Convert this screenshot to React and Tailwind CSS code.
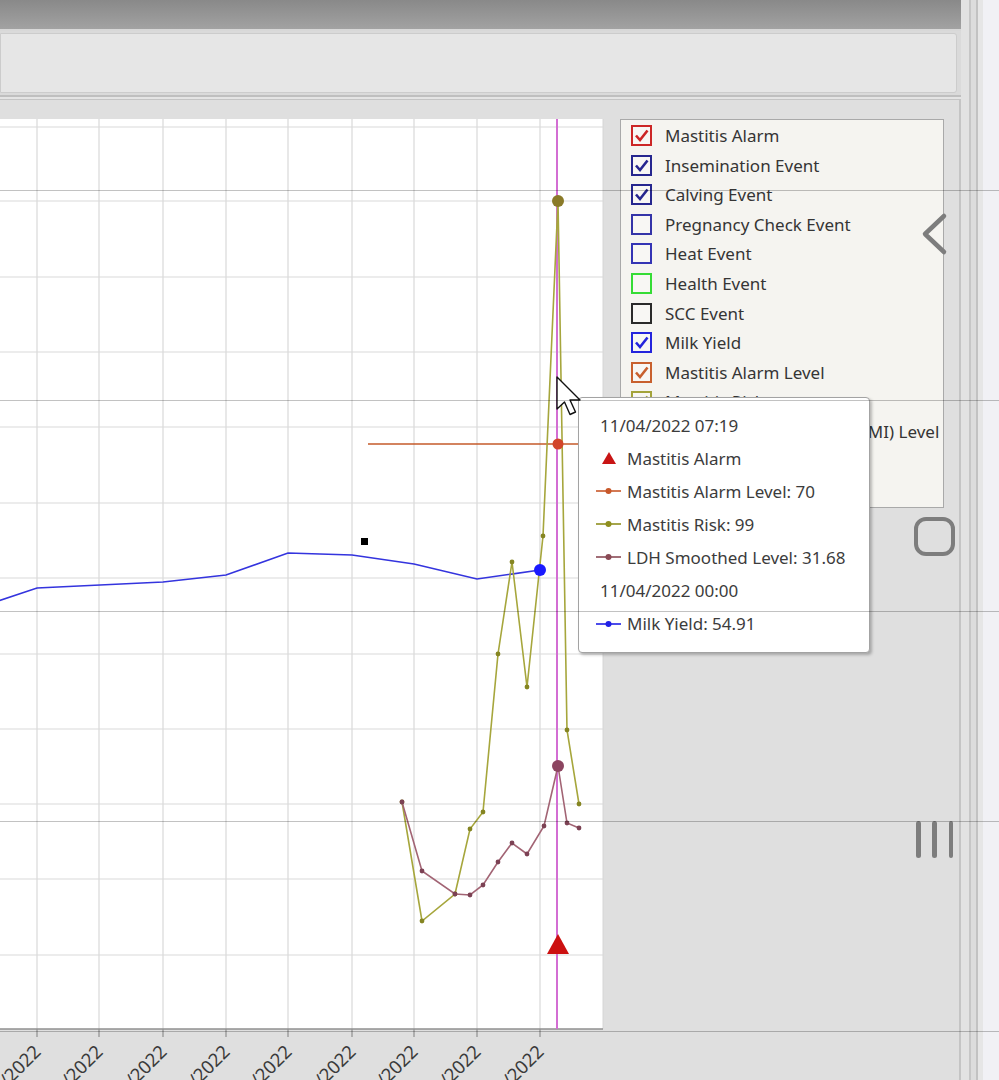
import React from "react";

const gridX = [37, 99, 163, 226, 288, 352, 414, 477, 540];
const gridY = [127, 201, 277, 352, 427, 503, 578, 654, 729, 804, 879, 955];
const tickDates = [
  "03/04/2022",
  "04/04/2022",
  "05/04/2022",
  "06/04/2022",
  "07/04/2022",
  "08/04/2022",
  "09/04/2022",
  "10/04/2022",
  "11/04/2022",
];

const milkYield = [
  [-5, 602], [37, 588], [163, 582], [226, 575], [288, 553],
  [352, 555], [414, 564], [477, 579], [540, 570],
];
const mastitisRisk = [
  [402, 802], [422, 921], [455, 894], [470, 829], [483, 812], [498, 654],
  [512, 562], [527, 687], [543, 536], [558, 201], [567, 730], [579, 804],
];
const ldhLevel = [
  [402, 802], [422, 871], [455, 894], [470, 895], [483, 885], [498, 862],
  [512, 843], [527, 854], [544, 826], [558, 766], [567, 823], [579, 828],
];

const legendItems = [
  { label: "Mastitis Alarm", color: "#cc2626", checked: true },
  { label: "Insemination Event", color: "#26268f", checked: true },
  { label: "Calving Event", color: "#26268f", checked: true },
  { label: "Pregnancy Check Event", color: "#3434a8", checked: false },
  { label: "Heat Event", color: "#3434b4", checked: false },
  { label: "Health Event", color: "#35dc35", checked: false },
  { label: "SCC Event", color: "#2a2a2a", checked: false },
  { label: "Milk Yield", color: "#2424dc", checked: true },
  { label: "Mastitis Alarm Level", color: "#c8602e", checked: true },
  { label: "Mastitis Risk", color: "#a3a33a", checked: true },
  { label: "LDH Mastitis Indications (MI) Level", color: "#8a4a5c", checked: true },
  { label: "LDH Smoothed Level", color: "#8a4a5c", checked: true },
];

const tooltipRows = [
  { kind: "date", text: "11/04/2022 07:19" },
  { kind: "triangle", text: "Mastitis Alarm" },
  { kind: "line", color: "#c8582a", text: "Mastitis Alarm Level: 70" },
  { kind: "line", color: "#8f8f1f", text: "Mastitis Risk: 99" },
  { kind: "line", color: "#8a4a55", text: "LDH Smoothed Level: 31.68" },
  { kind: "date", text: "11/04/2022 00:00" },
  { kind: "line", color: "#2020e6", text: "Milk Yield: 54.91" },
];

function toPoints(series) {
  return series.map(([x, y]) => `${x},${y}`).join(" ");
}

function Checkbox({ color, checked }) {
  return (
    <span
      className="flex h-[21px] w-[21px] shrink-0 items-center justify-center bg-[#f8f7f4]"
      style={{ border: `2px solid ${color}` }}
    >
      {checked ? (
        <svg width="15" height="15" viewBox="0 0 15 15">
          <path d="M2 7.5 L6 12 L13.5 2.5" fill="none" stroke={color} strokeWidth="2.6" strokeLinejoin="miter" />
        </svg>
      ) : null}
    </span>
  );
}

function Chart() {
  return (
    <svg width="620" height="980" viewBox="0 100 620 980" className="block shrink-0">
      <rect x="-2" y="119" width="605" height="910" fill="#ffffff" />
      {gridX.map((x) => (
        <line key={`gx-${x}`} x1={x} y1="119" x2={x} y2="1029" stroke="#d9d9d9" strokeWidth="1.2" />
      ))}
      <line x1="603" y1="119" x2="603" y2="1029" stroke="#d6d6d6" strokeWidth="1" />
      {gridY.map((y) => (
        <line key={`gy-${y}`} x1="-2" y1={y} x2="603" y2={y} stroke="#d9d9d9" strokeWidth="1.2" />
      ))}
      <line x1="-2" y1="1029" x2="603" y2="1029" stroke="#8f8f8f" strokeWidth="1.5" />
      {gridX.map((x) => (
        <line key={`tk-${x}`} x1={x} y1="1029" x2={x} y2="1037" stroke="#8f8f8f" strokeWidth="1.2" />
      ))}
      {gridX.map((x, i) => (
        <text
          key={`lb-${x}`}
          x={x + 5}
          y="1053"
          textAnchor="end"
          fontSize="18.5"
          fill="#3a3a3a"
          fontFamily="'Noto Sans', 'Open Sans', sans-serif"
          transform={`rotate(-45 ${x + 5} 1053)`}
        >
          {tickDates[i]}
        </text>
      ))}

      <line x1="557" y1="119" x2="557" y2="1029" stroke="#d36ed3" strokeWidth="2" />

      <polyline points={toPoints(milkYield)} fill="none" stroke="#3434de" strokeWidth="1.6" />
      <rect x="361" y="538" width="7" height="7" fill="#000000" />
      <line x1="368" y1="444" x2="600" y2="444" stroke="#c45a2a" strokeWidth="1.5" />

      <polyline points={toPoints(mastitisRisk)} fill="none" stroke="#a6a63c" strokeWidth="1.6" />
      {mastitisRisk.map(([x, y]) => (
        <circle key={`mr-${x}-${y}`} cx={x} cy={y} r="2.4" fill="#858522" />
      ))}
      <polyline points={toPoints(ldhLevel)} fill="none" stroke="#a26474" strokeWidth="1.6" />
      {ldhLevel.map(([x, y]) => (
        <circle key={`ld-${x}-${y}`} cx={x} cy={y} r="2.4" fill="#7c4254" />
      ))}

      <circle cx="540" cy="570" r="6" fill="#1a1aff" />
      <circle cx="558" cy="201" r="6" fill="#8a7a28" />
      <circle cx="558" cy="444" r="5.5" fill="#d2452a" />
      <circle cx="558" cy="766" r="6" fill="#8c4560" />
      <polygon points="558,934 547,954 569,954" fill="#cc1010" />
    </svg>
  );
}

function Legend() {
  return (
    <div className="mt-[19px] h-[389px] w-[324px] shrink-0 overflow-hidden border border-[#a9a9a9] bg-[#f5f4f0] pl-[10px] pt-[1px]">
      {legendItems.map((item) => (
        <div key={item.label} className="flex h-[29.55px] items-center gap-[13px] whitespace-nowrap">
          <Checkbox color={item.color} checked={item.checked} />
          <span className="text-[17px] leading-none text-[#353535]">{item.label}</span>
        </div>
      ))}
    </div>
  );
}

function Tooltip() {
  return (
    <div className="absolute left-[578px] top-[397px] h-[256px] w-[292px] rounded-[4px] border border-[#a3a3a3] bg-white pt-[10.5px] shadow-[2px_2px_3px_rgba(0,0,0,0.25)]">
      {tooltipRows.map((row, i) => (
        <div
          key={i}
          className={`flex h-[33.1px] items-center whitespace-nowrap text-[17px] leading-none text-[#3c3c3c] ${
            row.kind === "date" ? "pl-[21px]" : "pl-[17px]"
          }`}
        >
          {row.kind === "triangle" ? (
            <span className="mr-[6px] flex w-[25px] justify-center">
              <svg width="14" height="13" viewBox="0 0 14 13">
                <polygon points="7,0 0,12 14,12" fill="#c81414" />
              </svg>
            </span>
          ) : null}
          {row.kind === "line" ? (
            <span className="mr-[6px] flex w-[25px] items-center">
              <svg width="25" height="8" viewBox="0 0 25 8">
                <line x1="0" y1="4" x2="25" y2="4" stroke={row.color} strokeWidth="1.6" />
                <circle cx="12.5" cy="4" r="3" fill={row.color} />
              </svg>
            </span>
          ) : null}
          <span>{row.text}</span>
        </div>
      ))}
    </div>
  );
}

function Cursor() {
  return (
    <svg className="absolute left-[555px] top-[375px]" width="32" height="46" viewBox="0 0 32 46">
      <path
        d="M2 2 L2 34 L9.5 27 L15 39.5 L20.5 37 L15 25 L25 25 Z"
        fill="#ffffff"
        stroke="#111111"
        strokeWidth="1.4"
        strokeLinejoin="round"
      />
    </svg>
  );
}

function NavOverlay() {
  return (
    <>
      <svg className="absolute left-[918px] top-[210px]" width="34" height="48" viewBox="0 0 34 48">
        <path d="M26 6 L7 24 L26 42" fill="none" stroke="#7d7d7d" strokeWidth="4.5" strokeLinecap="round" strokeLinejoin="round" />
      </svg>
      <div className="absolute left-[914px] top-[517px] h-[39px] w-[41px] rounded-[12px] border-[4px] border-[#7d7d7d]" />
      <div className="absolute left-[916px] top-[821px] flex h-[37px] w-[37px] justify-between">
        <span className="h-full w-[4.5px] rounded-full bg-[#7d7d7d]" />
        <span className="h-full w-[4.5px] rounded-full bg-[#7d7d7d]" />
        <span className="h-full w-[4.5px] rounded-full bg-[#7d7d7d]" />
      </div>
    </>
  );
}

export default function App() {
  return (
    <div className="relative h-[1080px] w-[999px] overflow-hidden bg-[#dfdfdf] font-['Noto_Sans','Open_Sans',sans-serif]">
      <div className="flex h-full">
        <div className="flex w-[961px] shrink-0 flex-col">
          <div className="h-[30px] bg-gradient-to-b from-[#898989] to-[#a2a2a2]" />
          <div className="border-t-[2px] border-[#d8d8d8] bg-[#dadada] pb-[2px] pr-[4px] pt-[2px]">
            <div className="h-[60px] rounded-r-[3px] border border-[#cccccc] bg-[#e6e6e6]" />
          </div>
          <div className="h-[2px] bg-[#bfbfbf]" />
          <div className="h-[2px] bg-[#e4e4e4]" />
          <div className="flex flex-1 border-r-[2px] border-t-[1px] border-[#c4c4c4] bg-[#dfdfdf]">
            <Chart />
            <Legend />
          </div>
        </div>
        <div className="flex flex-1">
          <div className="w-[8px] bg-[#e2e2e2]" />
          <div className="w-[2px] bg-[#c6c6c6]" />
          <div className="w-[5px] bg-[#dcdcdc]" />
          <div className="w-[2px] bg-[#c2c2c2]" />
          <div className="w-[5px] bg-[#e6e6e6]" />
          <div className="flex-1 bg-[#f1f1f5]" />
        </div>
      </div>

      <Tooltip />
      <Cursor />
      <NavOverlay />

      {[190, 400, 611, 821, 1031].map((y) => (
        <div key={y} className="pointer-events-none absolute left-0 h-px w-full bg-[rgba(0,0,0,0.24)]" style={{ top: y }} />
      ))}
    </div>
  );
}
